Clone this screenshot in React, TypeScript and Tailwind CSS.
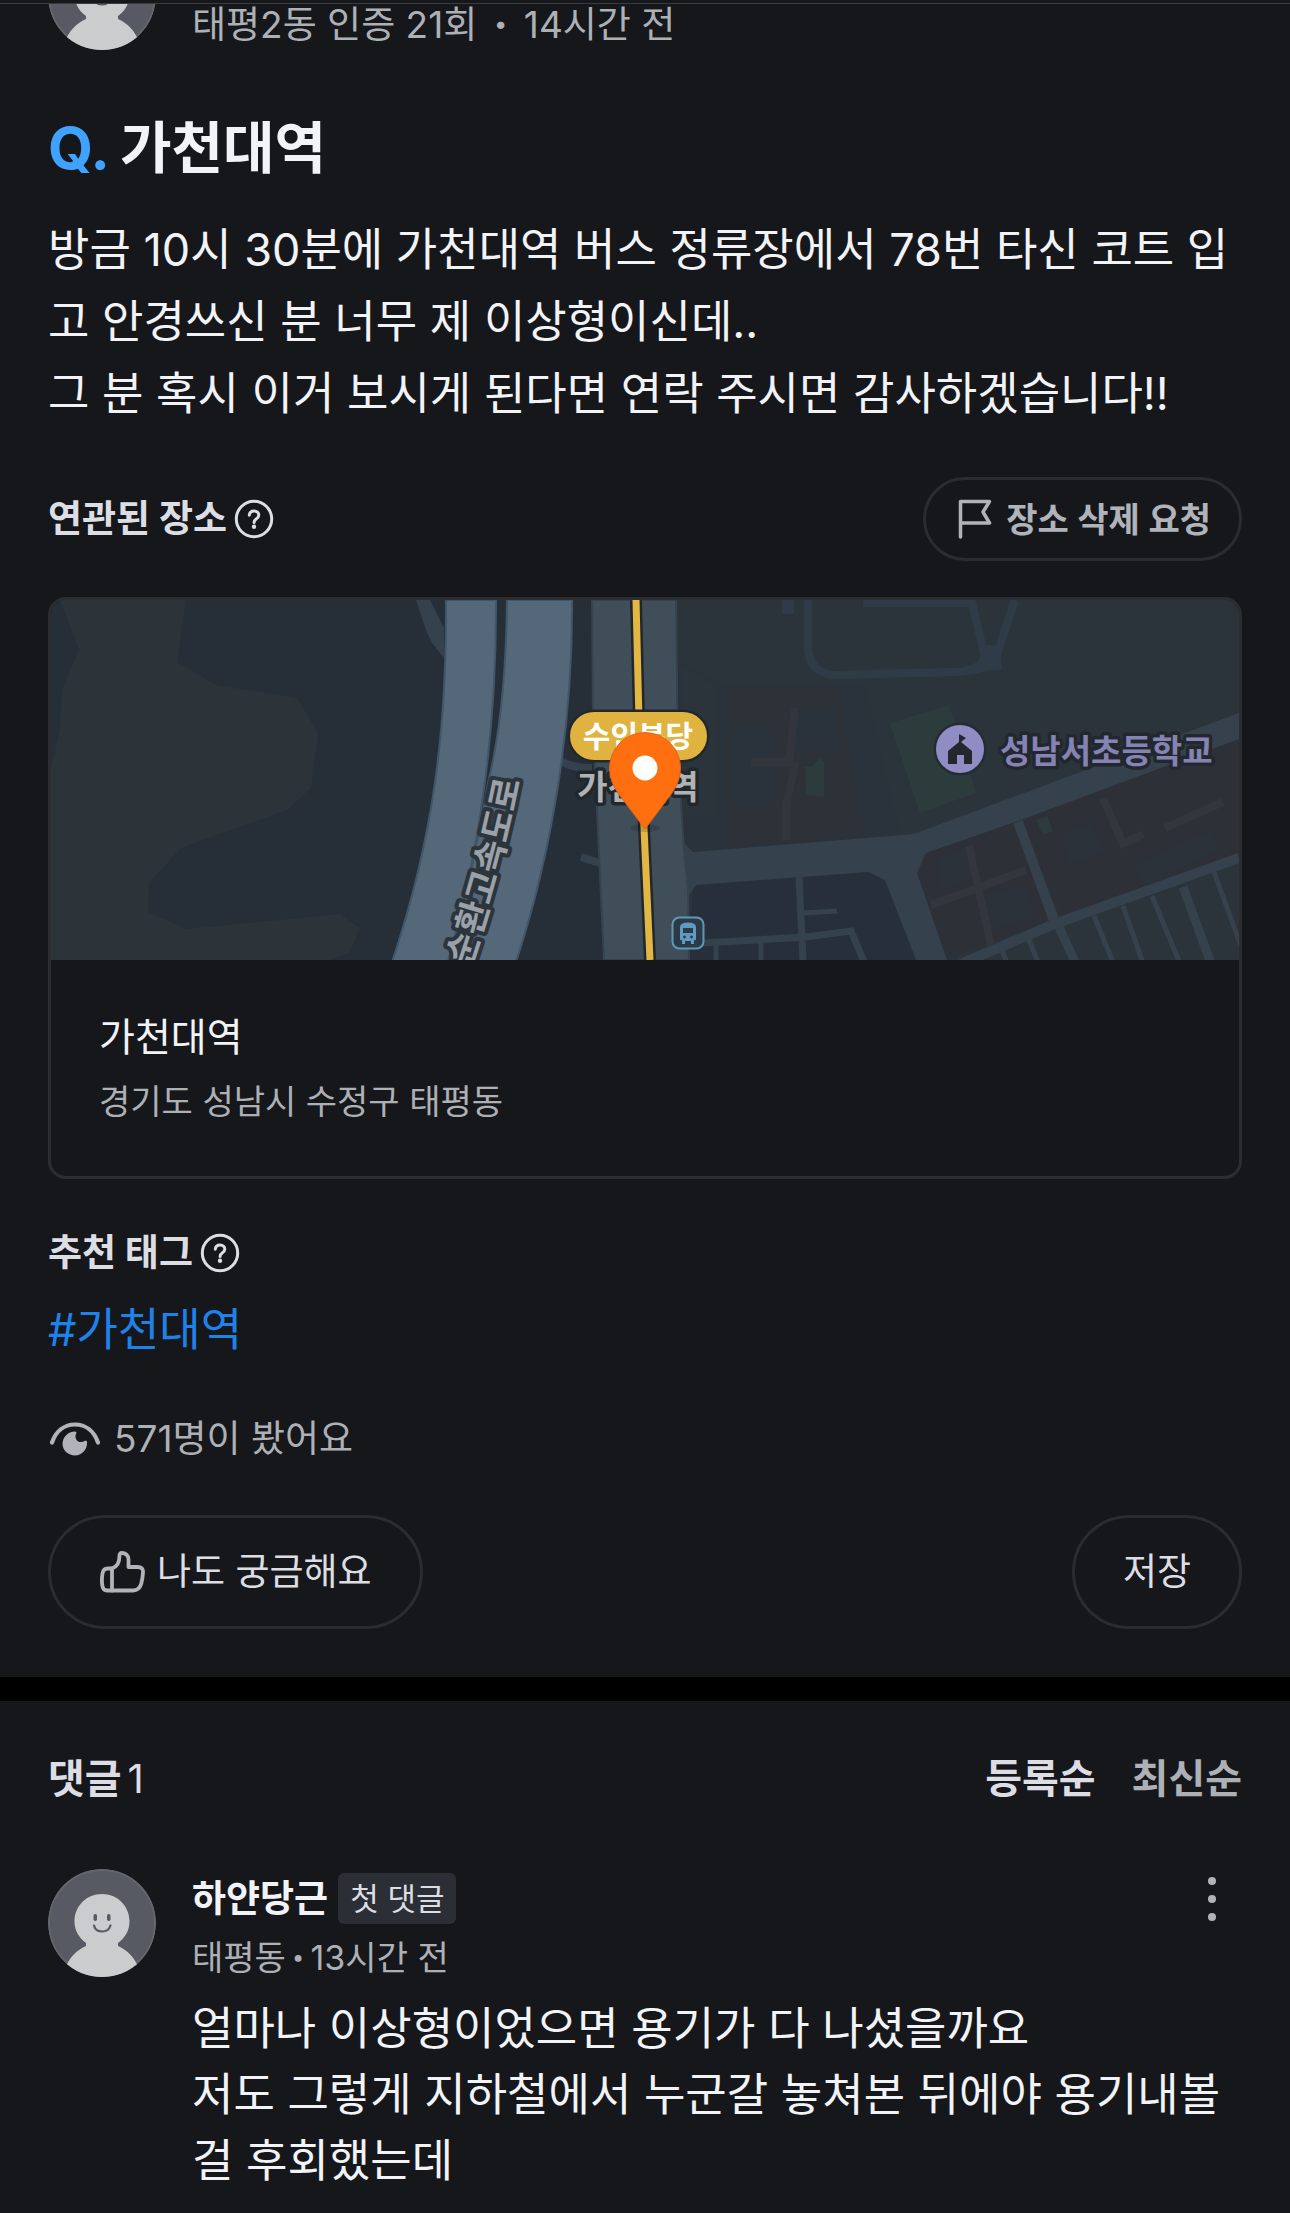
import React, { useState } from 'react';

type SortOrder = 'oldest' | 'newest';

const Avatar: React.FC = () => (
    <svg viewBox="0 0 108 108" className="w-[108px] h-[108px] shrink-0" aria-hidden="true">
        <defs>
            <clipPath id="avatar-clip">
                <circle cx="54" cy="54" r="54" />
            </clipPath>
        </defs>
        <g clipPath="url(#avatar-clip)">
            <circle cx="54" cy="54" r="54" fill="#575a62" />
            <circle cx="54" cy="54" r="53" fill="none" stroke="#64666d" strokeWidth="2" />
            <path d="M54 25c15.500 0 27.500 12 27.500 27.500 0 9-4.500 16.500-11.500 21.500v3c10 4.500 17 12 20.500 22L76 112H32L17.500 99c3.500-10 10.500-17.500 20.500-22v-3c-7-5-11.500-12.500-11.500-21.500C26.500 37 38.500 25 54 25z" fill="#cbccce" />
        </g>
        <rect x="45.500" y="45" width="3.500" height="7" rx="1.700" fill="#575a62" />
        <rect x="59" y="45" width="3.500" height="7" rx="1.700" fill="#575a62" />
        <path d="M46 56.500c2 8 14 8 16.500 0" fill="none" stroke="#575a62" strokeWidth="2.200" strokeLinecap="round" />
    </svg>
);

const HelpIcon = () => (
    <svg viewBox="0 0 40 40" className="w-10 h-10" fill="none" stroke="#dcdee3" aria-hidden="true">
        <circle cx="20" cy="20" r="17.700" strokeWidth="3" />
        <path d="M15.300 16.200c.3-2.700 2.200-4.200 4.800-4.200 2.700 0 4.700 1.700 4.700 4.100 0 2-1 2.900-2.600 4-1.500 1-2.100 1.700-2.100 3.400" strokeWidth="3" strokeLinecap="round" />
        <circle cx="20" cy="27.700" r="2.200" fill="#dcdee3" stroke="none" />
    </svg>
);

const FlagIcon = () => (
    <svg viewBox="0 0 34 40" className="w-[34px] h-10" fill="none" stroke="#b0b3ba" strokeWidth="3.500" strokeLinecap="round" strokeLinejoin="round" aria-hidden="true">
        <path d="M2.500 38V2.500h29L25 13l6.500 11h-29" />
    </svg>
);

const EyeIcon = () => (
    <svg viewBox="0 0 52 36" className="w-[52px] h-9" aria-hidden="true">
        <path d="M4 21.500C8 10 16.500 3.500 27 3.500S46 10 50 21.500" fill="none" stroke="#b0b3ba" strokeWidth="4.200" strokeLinecap="round" />
        <path d="M27 10.500c1.500 0 1.700 1 1.200 2-1.500 3-.5 6.500 2 8 2 1 4.500.7 6-.2 1.500-1 2.900-.3 2.900 1.200 0 7.500-5.500 13-12.100 13S14.500 29.500 14.500 23c0-7 5.500-12.500 12.500-12.500z" fill="#b0b3ba" />
    </svg>
);

const ThumbIcon = () => (
    <svg viewBox="0 0 46 44" className="w-[46px] h-11" fill="none" stroke="#b0b3ba" strokeWidth="3.800" strokeLinejoin="round" strokeLinecap="round" aria-hidden="true">
        <path d="M13 18.500c5-1.500 7.500-6 7.500-13 0-1.600.7-2.500 2.200-2.500 4 0 6.800 2.500 6.800 6.500v7.500h9c4 0 5.800 2 5.500 5.500-.3 4-.7 7.500-1.700 11-1.300 4.500-4 7-8.300 7H8c-2.700 0-4-1.300-4.500-4-.8-4-.8-8.500 0-13 .5-3 2-5 5-5z" />
        <path d="M13 18.500v22" />
    </svg>
);

const MoreIcon = () => (
    <svg viewBox="0 0 12 48" className="w-3 h-12" fill="#b0b3ba" aria-hidden="true">
        <circle cx="6" cy="6" r="4" />
        <circle cx="6" cy="24" r="4" />
        <circle cx="6" cy="42" r="4" />
    </svg>
);

const PlaceMap = () => (
    <svg
        viewBox="0 0 1188 360"
        preserveAspectRatio="xMidYMid slice"
        className="block w-full h-[360px] font-['Inter','Noto_Sans_CJK_KR',sans-serif]"
        role="img"
        aria-label="가천대역 지도"
    >
        <rect width="1188" height="360" fill="#262f38" />
        <path d="M9 0L28 50L11 90L9 130L0 168V360H279L299 352L309 328L289 314L136 329L97 312L98 283L130 248L236 210L260 188L267 133L246 98L165 85L126 62L135 0Z" fill="#2c3439" />

        {/* land east of the railway */}
        <path d="M625 0H1188V360H636Z" fill="#2c343b" />
        <path d="M627 60L668 82H813L850 235L642 252L633 243Z" fill="#2a323b" />
        <path d="M631 66L666 86V215H631Z" fill="#2b333b" />
        <path d="M676 88H788L813 237L676 247Z" fill="#2d3138" />
        <path d="M682 124H720V204H682ZM744 108H786V150H744Z" fill="#2a323b" />
        <path d="M744 108L738 162H700M745 162L735 205V240" fill="none" stroke="#32353c" strokeWidth="8" />
        <path d="M839 123L898 105L925 193L869 213Z" fill="#2c3b3c" />
        <path d="M754 167L762 166L768 158L773 162V197L755 195Z" fill="#2c3b3c" />
        <g fill="none" stroke="#2f3c48" strokeWidth="8">
            <path d="M757 0V50Q760 74 784 75L905 72Q938 70 944 60L964 0" />
            <path d="M812 3H921L933 53Q934 68 915 70" />
            <path d="M944 70L942 45" strokeWidth="14" />
            <path d="M737 0V14" strokeWidth="12" />
        </g>

        {/* streets */}
        <path d="M633 250L642 285L637 360H870L834 275L817 265Z" fill="#27303a" />
        <path d="M875 253L964 222L1002 319L896 360L866 273Z" fill="#2d3037" />
        <path d="M970 220L1188 139V256L1010 319Z" fill="#2d3037" />
        <path d="M885 258L918 246L926 276L890 290ZM928 295L975 285L985 318L940 330ZM1008 236L1040 222L1054 252L1020 265ZM1080 266L1160 230L1170 250L1095 285Z" fill="#2b323a" />
        <path d="M918 246L940 345M880 305L975 270M1052 198L1072 244L1092 234M1114 228L1172 202" fill="none" stroke="#33363d" strokeWidth="8" />
        <path d="M985 220L996 216L1002 231L992 235Z" fill="#2c3b3c" />
        <path d="M633 243L642 252L863 234L946 203L1188 113V139L964 222L875 253L866 273L896 360H865L834 280L817 272L645 285L637 297Z" fill="#35414d" />
        <g fill="none" stroke="#35414d">
            <path d="M967 222L1004 323" strokeWidth="10" />
            <path d="M900 368L1006 323L1188 258" strokeWidth="10" />
            <path d="M1008 327L1024 362M1132 287L1161 366" strokeWidth="9" />
            <path d="M948 344L956 362M977 338L987 362M1043 316L1062 362M1072 306L1093 366M1101 296L1130 366M1163 272L1190 346" strokeWidth="5" />
            <path d="M748 277L752 360M651 343L755 337L800 331L814 364" strokeWidth="7" />
            <path d="M753 313L786 311M665 345V360M710 343V360" strokeWidth="5" />
        </g>

        {/* railway */}
        <path d="M505 155Q512 168 541 168M530 257L552 264" fill="none" stroke="#35414c" strokeWidth="8" />
        <path d="M541 0L542 123L546 210L553 360H638L637 290L633 250L627 157L625 0Z" fill="#404e5a" stroke="#36434e" strokeWidth="2" />

        {/* expressway */}
        <path d="M365 0L375 30L381 43L393 58V28L379 0Z" fill="#35414c" />
        <path d="M395 0C396 130 382 240 341 362H397Q446 190 445 0Z" fill="#556879" stroke="#3f566b" strokeWidth="2" />
        <path d="M456 0Q455 110 437 183Q422 275 397 362H465C502 250 522 120 521 0Z" fill="#556879" stroke="#3f566b" strokeWidth="2" />
        <path id="expressway-label" d="M393 440Q446 300 469 181" fill="none" />
        <text fontSize="35" fontWeight="700" fill="#9aa1a8" stroke="#2c343c" strokeWidth="8" strokeLinejoin="round" paintOrder="stroke" textAnchor="end">
            <textPath href="#expressway-label" startOffset="100%">순환고속도로</textPath>
        </text>

        <path d="M585 0L588 120L593 228L599 360" fill="none" stroke="#22272c" strokeWidth="12" />
        <path d="M585 0L588 120L593 228L599 360" fill="none" stroke="#e3b743" strokeWidth="7" />

        <rect x="519" y="112" width="137" height="48" rx="24" fill="#e0b340" stroke="#22272c" strokeWidth="5" paintOrder="stroke" />
        <text x="587" y="147" fontSize="30" fontWeight="700" fill="#ffffff" textAnchor="middle">수인분당</text>
        <text x="587" y="199" fontSize="33" fontWeight="700" fill="#b0b3b6" stroke="#22272c" strokeWidth="7" strokeLinejoin="round" paintOrder="stroke" textAnchor="middle">가천대역</text>

        {/* bus stop */}
        <rect x="621.500" y="317.500" width="31" height="31" rx="7" fill="#2c3a46" stroke="#5f97b5" strokeWidth="2" />
        <path d="M629 327q0-4.500 8-4.500t8 4.500v13h-2v4h-3v-3h-6v3h-3v-4h-2z" fill="#5f9ac4" />
        <path d="M632 328h10v5h-10z" fill="#2c3a46" />
        <circle cx="633.500" cy="337" r="1.400" fill="#2c3a46" />
        <circle cx="640.500" cy="337" r="1.400" fill="#2c3a46" />

        {/* school */}
        <circle cx="909" cy="149" r="24" fill="#8f8dc3" stroke="#262c34" strokeWidth="5" paintOrder="stroke" />
        <path d="M897 164v-13l11-9v-8l7 4-5 4 11 9v13h-8v-9h-7v9z" fill="#23282f" />
        <text x="949" y="163" fontSize="33" fontWeight="700" fill="#8583b4" stroke="#23282f" strokeWidth="7" strokeLinejoin="round" paintOrder="stroke">성남서초등학교</text>

        <ellipse cx="594" cy="228" rx="15" ry="4" fill="#000000" opacity="0.15" />
        <path d="M594 229L567 193Q558.500 181 558.500 168a35.500 35.500 0 0 1 71 0Q629.500 181 621 193Z" fill="#ff6f0f" stroke="#d9661b" strokeWidth="1" />
        <circle cx="594" cy="168" r="12.500" fill="#ffffff" />
    </svg>
);

const App: React.FC = () => {
    const [sort, setSort] = useState<SortOrder>('oldest');

    return (
        <div className="min-h-screen bg-[#16171b] text-[#f2f3f6] font-['Inter','Noto_Sans_CJK_KR',sans-serif]">
            <div className="h-1 border-b border-[#3a3b3f]" />

            <article className="px-12 pb-12">
                <div className="flex gap-9">
                    <div className="h-[46px] overflow-hidden flex items-end">
                        <Avatar />
                    </div>
                    <p className="text-[37px] leading-[42px] text-[#adb0b5]">
                        태평2동 인증 21회 <span className="mx-1.5 font-black">·</span> 14시간 전
                    </p>
                </div>

                <h1 className="mt-[62px] flex items-center gap-[10px] text-[56px] leading-[72px] font-bold">
                    <span className="text-[58px] text-[#3fa2ff]">Q.</span>
                    가천대역
                </h1>
                <p className="mt-[30px] text-[45px] leading-[72px]">
                    방금 10시 30분에 가천대역 버스 정류장에서 78번 타신 코트 입고 안경쓰신 분 너무 제 이상형이신데..
                    <br />
                    그 분 혹시 이거 보시게 된다면 연락 주시면 감사하겠습니다!!
                </p>

                <div className="mt-[47px] flex items-center justify-between">
                    <div className="flex items-center gap-[7px]">
                        <h2 className="text-[37px] leading-[48px] font-bold text-[#dcdee3]">연관된 장소</h2>
                        <button type="button" aria-label="연관된 장소 도움말"><HelpIcon /></button>
                    </div>
                    <button type="button" className="h-[84px] pl-8 pr-7 flex items-center gap-[14px] rounded-full border-3 border-[#2b2c30] text-[34px] font-semibold text-[#b0b3ba]">
                        <FlagIcon />
                        장소 삭제 요청
                    </button>
                </div>

                <div className="mt-9 rounded-[18px] border-3 border-[#2b2d31] overflow-hidden">
                    <PlaceMap />
                    <div className="px-12 py-[50px]">
                        <p className="text-[39px] leading-[54px]">가천대역</p>
                        <p className="mt-[14px] text-[34px] leading-[48px] text-[#adb0b5]">경기도 성남시 수정구 태평동</p>
                    </div>
                </div>

                <div className="mt-[50px] flex items-center gap-[7px]">
                    <h2 className="text-[37px] leading-[48px] font-bold text-[#dcdee3]">추천 태그</h2>
                    <button type="button" aria-label="추천 태그 도움말"><HelpIcon /></button>
                </div>
                <a href="#tag" className="mt-5 block w-fit text-[45px] leading-[66px] text-[#1e82eb]">#가천대역</a>

                <div className="mt-[52px] flex items-center gap-[14px]">
                    <EyeIcon />
                    <p className="text-[37px] leading-[48px] text-[#adb0b5]">571명이 봤어요</p>
                </div>

                <div className="mt-[52px] flex items-center justify-between">
                    <button type="button" className="h-[114px] px-12 flex items-center gap-3 rounded-full border-3 border-[#2b2c30] text-[37px] text-[#dcdee3]">
                        <ThumbIcon />
                        나도 궁금해요
                    </button>
                    <button type="button" className="h-[114px] px-12 rounded-full border-3 border-[#2b2c30] text-[37px] text-[#dcdee3]">저장</button>
                </div>
            </article>

            <div className="h-6 bg-black" />

            <section className="px-12 pt-[51px]">
                <div className="flex items-center justify-between text-[40px] leading-[54px] text-[#dcdee3]">
                    <h2 className="flex gap-1.5 font-bold">
                        댓글
                        <span className="font-normal">1</span>
                    </h2>
                    <div className="flex gap-9 font-bold">
                        <button type="button" onClick={() => setSort('oldest')} className={sort === 'oldest' ? 'text-[#dcdee3]' : 'text-[#adb0b5]'}>등록순</button>
                        <button type="button" onClick={() => setSort('newest')} className={sort === 'newest' ? 'text-[#dcdee3]' : 'text-[#adb0b5]'}>최신순</button>
                    </div>
                </div>

                <div className="mt-[63px] flex gap-9">
                    <Avatar />
                    <div className="flex-1 pt-1">
                        <div className="flex items-center">
                            <span className="text-[37px] leading-[48px] font-bold">하얀당근</span>
                            <span className="ml-[10px] px-3 rounded-md bg-[#2b2e35] text-[31px] leading-[51px] text-[#dcdee3]">첫 댓글</span>
                            <button type="button" aria-label="더보기" className="ml-auto mr-6"><MoreIcon /></button>
                        </div>
                        <p className="mt-3 text-[34px] leading-[44px] text-[#adb0b5]">
                            태평동<span className="mx-1.5 font-black">·</span>13시간 전
                        </p>
                        <p className="mt-4 text-[45px] leading-[66px]">
                            얼마나 이상형이었으면 용기가 다 나셨을까요
                            <br />
                            저도 그렇게 지하철에서 누군갈 놓쳐본 뒤에야 용기내볼걸 후회했는데
                        </p>
                    </div>
                </div>
            </section>
        </div>
    );
};

export default App;
